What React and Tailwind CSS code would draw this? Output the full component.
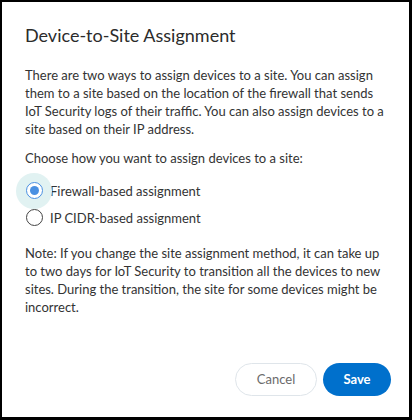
import React, { useState } from 'react';

export default function App() {
  const [method, setMethod] = useState('firewall');

  const options = [
    { id: 'firewall', label: 'Firewall-based assignment' },
    { id: 'cidr', label: 'IP CIDR-based assignment' },
  ];

  return (
    <div
      className="w-[412px] h-[420px] bg-white border-black border-t-2 border-l-2 border-r-[3px] border-b-[3px] flex flex-col text-[#333333]"
      style={{ fontFamily: 'Lato, "Open Sans", sans-serif' }}
    >
      <div className="px-[23px] pt-[21px] flex-1">
        <h2 className="text-[18px] leading-[24px] text-[#2b2b2b]">Device-to-Site Assignment</h2>

        <p className="mt-[19px] text-[13px] leading-[18px]">
          There are two ways to assign devices to a site. You can assign them to a site based on the location of the firewall that sends IoT Security logs of their traffic. You can also assign devices to a site based on their IP address.
        </p>

        <p className="mt-[11px] text-[13px] leading-[18px]">Choose how you want to assign devices to a site:</p>

        <div className="mt-[10px] flex flex-col">
          {options.map(opt => {
            const checked = method === opt.id;
            return (
              <label key={opt.id} className="flex items-center h-[27px] cursor-pointer">
                <span className="relative w-[18px] h-[18px] flex items-center justify-center shrink-0">
                  {checked && (
                    <span className="absolute w-[36px] h-[36px] rounded-full bg-[#e1f2f2]" />
                  )}
                  <span
                    className={
                      checked
                        ? 'relative w-[17px] h-[17px] rounded-full border border-[#4a90e2] bg-white flex items-center justify-center'
                        : 'relative w-[17px] h-[17px] rounded-full border border-[#444444] bg-white'
                    }
                  >
                    {checked && <span className="w-[9px] h-[9px] rounded-full bg-[#4a90e2]" />}
                  </span>
                  <input
                    type="radio"
                    name="method"
                    className="sr-only"
                    checked={checked}
                    onChange={() => setMethod(opt.id)}
                  />
                </span>
                <span className="ml-[7px] text-[13px] leading-[18px]">{opt.label}</span>
              </label>
            );
          })}
        </div>

        <p className="mt-[13px] text-[13px] leading-[18px]">
          Note: If you change the site assignment method, it can take up to two days for IoT Security to transition all the devices to new sites. During the transition, the site for some devices might be incorrect.
        </p>
      </div>

      <div className="flex justify-end gap-[6px] px-[18px] pb-[21px]">
        <button className="w-[82px] h-[33px] rounded-full border border-[#dfe5ea] bg-white text-[13px] text-[#6b6b6b]">
          Cancel
        </button>
        <button className="w-[68px] h-[33px] rounded-full bg-[#0070cc] text-[13px] font-bold text-white">
          Save
        </button>
      </div>
    </div>
  );
}
